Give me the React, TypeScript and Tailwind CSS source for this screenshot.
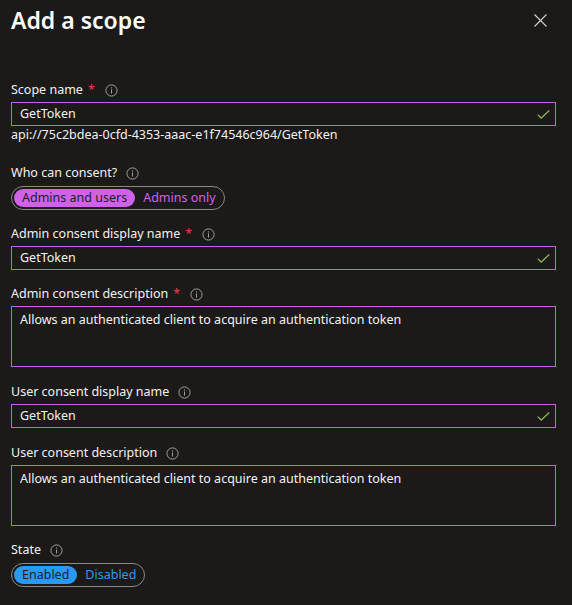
import type { ReactNode } from "react";

const font = { fontFamily: '"Noto Sans", "Open Sans", sans-serif' };

function InfoIcon() {
  return (
    <svg width="13" height="13" viewBox="0 0 13 13" className="shrink-0" aria-hidden="true">
      <circle cx="6.5" cy="6.5" r="5.6" fill="none" stroke="#a19f9d" strokeWidth="1" />
      <rect x="6" y="5.5" width="1" height="4" fill="#a19f9d" />
      <rect x="6" y="3.4" width="1" height="1.1" fill="#a19f9d" />
    </svg>
  );
}

function Check() {
  return (
    <svg width="13" height="9" viewBox="0 0 13 9" className="shrink-0" aria-hidden="true">
      <path d="M0.7 4.6 L4.2 8 L12.3 0.6" fill="none" stroke="#8cb15b" strokeWidth="1.3" />
    </svg>
  );
}

function Label({ text, required }: { text: string; required?: boolean }) {
  return (
    <div className="flex h-5 items-center pt-[1px] text-[12.5px] text-[#f3f2f1]">
      <span>{text}</span>
      {required && <span className="ml-[5px] text-[#e8404f]">*</span>}
      <span className={required ? "ml-[10px]" : "ml-[9px]"}>
        <InfoIcon />
      </span>
    </div>
  );
}

function Input({ value }: { value: string }) {
  return (
    <div className="mt-[2px] flex h-6 items-center justify-between border border-[#c95fe6] pl-2 pr-[5px] text-[12.5px] text-[#f3f2f1]">
      <span className="pt-[1px]">{value}</span>
      <Check />
    </div>
  );
}

function TextArea({ value }: { value: string }) {
  return (
    <div className="mt-[2px] h-[61px] border border-[#c95fe6] px-2 pt-[4px] text-[12.5px] leading-[18px] text-[#f3f2f1]">
      {value}
    </div>
  );
}

function Pill({
  options,
  fill,
  text,
}: {
  options: string[];
  fill: string;
  text: string;
}) {
  return (
    <div className="mt-[3px] flex h-6 w-fit items-center rounded-full border border-[#8a8886] p-[2px] pr-[8px] text-[12.5px]">
      <span className={`flex h-[18px] items-center rounded-full px-[8px] text-[#201f1e] ${fill}`}>
        {options[0]}
      </span>
      <span className={`ml-[8px] ${text}`}>{options[1]}</span>
    </div>
  );
}

function Field({ children, className }: { children: ReactNode; className?: string }) {
  return <div className={className}>{children}</div>;
}

export default function App() {
  const desc = "Allows an authenticated client to acquire an authentication token";
  return (
    <div className="min-h-[605px] w-[572px] bg-[#1b1a19] pl-[11px] pr-4" style={font}>
      <div className="flex h-10 items-center justify-between">
        <h1 className="text-[23px] font-semibold text-white">Add a scope</h1>
        <svg width="13" height="13" viewBox="0 0 13 13" className="mr-[9px]" aria-hidden="true">
          <path d="M0.5 0.5 L12.5 12.5 M12.5 0.5 L0.5 12.5" stroke="#d2d0ce" strokeWidth="1.1" />
        </svg>
      </div>

      <Field className="mt-10">
        <Label text="Scope name" required />
        <Input value="GetToken" />
        <div className="flex h-[18px] items-center pt-[1px] text-[12.5px] text-[#f3f2f1]">
          api://75c2bdea-0cfd-4353-aaac-e1f74546c964/GetToken
        </div>
      </Field>

      <Field className="mt-[19px]">
        <Label text="Who can consent?" />
        <Pill options={["Admins and users", "Admins only"]} fill="bg-[#d062ea]" text="text-[#d062ea]" />
      </Field>

      <Field className="mt-[14px]">
        <Label text="Admin consent display name" required />
        <Input value="GetToken" />
      </Field>

      <Field className="mt-[14px]">
        <Label text="Admin consent description" required />
        <TextArea value={desc} />
      </Field>

      <Field className="mt-[15px]">
        <Label text="User consent display name" />
        <Input value="GetToken" />
      </Field>

      <Field className="mt-[15px]">
        <Label text="User consent description" />
        <TextArea value={desc} />
      </Field>

      <Field className="mt-[14px]">
        <Label text="State" />
        <Pill options={["Enabled", "Disabled"]} fill="bg-[#2899f5]" text="text-[#2899f5]" />
      </Field>
    </div>
  );
}
